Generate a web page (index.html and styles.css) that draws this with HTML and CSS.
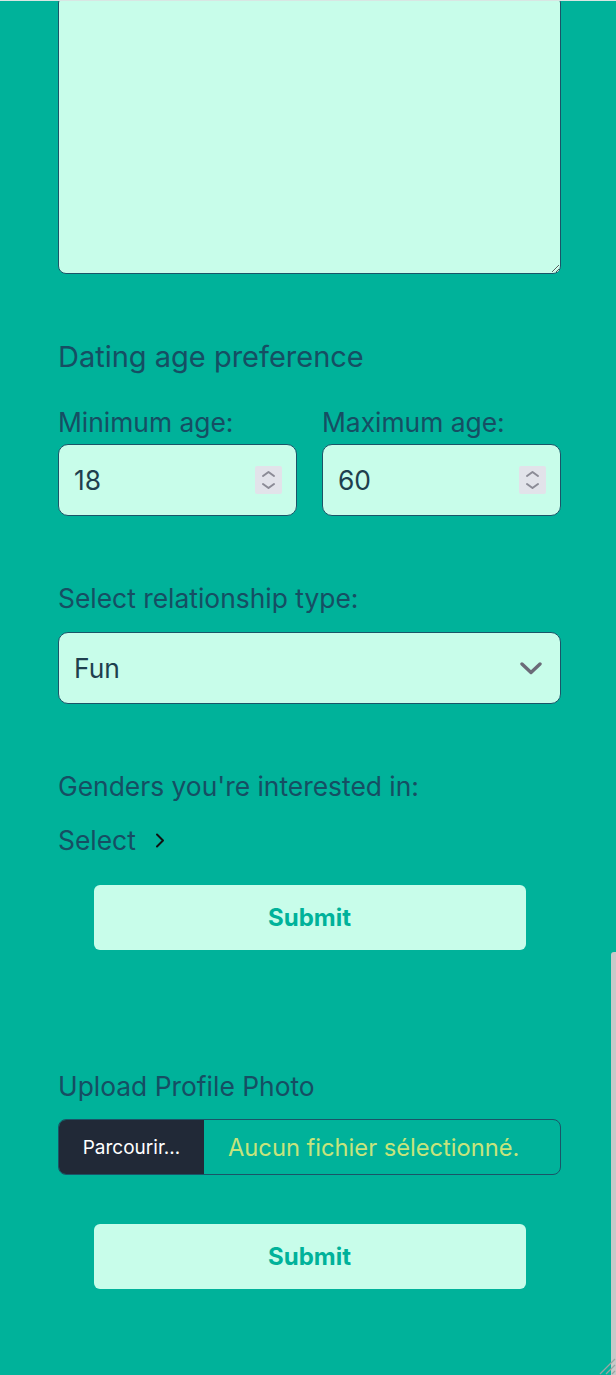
FILE: index.html
```html
<!DOCTYPE html>
<html lang="en">
<head>
<meta charset="utf-8">
<title>Profile</title>
<link rel="stylesheet" href="styles.css">
</head>
<body>
<div class="page">
  <form class="wrap">
    <textarea class="bio"></textarea>

    <h2 class="heading">Dating age preference</h2>
    <div class="age-row">
      <div class="field">
        <label class="label">Minimum age:</label>
        <div class="num-input">
          <span class="val">18</span>
          <span class="spin">
            <svg width="27" height="28" viewBox="0 0 27 28"><path d="M8 10 L13.5 6 L19 10 M8 18 L13.5 22 L19 18" fill="none" stroke="#8b8b96" stroke-width="2" stroke-linecap="round" stroke-linejoin="round"/></svg>
          </span>
        </div>
      </div>
      <div class="field">
        <label class="label">Maximum age:</label>
        <div class="num-input">
          <span class="val">60</span>
          <span class="spin">
            <svg width="27" height="28" viewBox="0 0 27 28"><path d="M8 10 L13.5 6 L19 10 M8 18 L13.5 22 L19 18" fill="none" stroke="#8b8b96" stroke-width="2" stroke-linecap="round" stroke-linejoin="round"/></svg>
          </span>
        </div>
      </div>
    </div>

    <label class="label rel-label">Select relationship type:</label>
    <div class="select">
      <span class="val">Fun</span>
      <svg width="22" height="13" viewBox="0 0 22 13"><path d="M2 2 L11 10.5 L20 2" fill="none" stroke="#6b6b78" stroke-width="3.4" stroke-linecap="round" stroke-linejoin="round"/></svg>
    </div>

    <label class="label gen-label">Genders you're interested in:</label>
    <div class="picker">
      <span>Select</span>
      <svg width="10" height="15" viewBox="0 0 10 15"><path d="M2 1.5 L8 7.5 L2 13.5" fill="none" stroke="#111" stroke-width="2" stroke-linecap="round" stroke-linejoin="round"/></svg>
    </div>

    <button type="button" class="submit first">Submit</button>

    <label class="label up-label">Upload Profile Photo</label>
    <div class="file">
      <span class="browse">Parcourir…</span>
      <span class="none">Aucun fichier sélectionné.</span>
    </div>

    <button type="button" class="submit second">Submit</button>
  </form>
  <div class="scroll-thumb"></div>
  <svg class="grip" width="18" height="20" viewBox="0 0 18 20"><path d="M2 19 L17 4 M8 19 L17 10 M14 19 L17 16" stroke="#9aa6a3" stroke-width="1.3"/></svg>
</div>
</body>
</html>
```
FILE: styles.css
```css
* { box-sizing: border-box; }
html, body { margin: 0; padding: 0; }
body {
  background: #00b29a;
  font-family: Inter, "Noto Sans", sans-serif;
  color: #164e63;
  height: 1375px;
  overflow: hidden;
  border-top: 1px solid #d9e6e3;
}
.page { position: relative; height: 1374px; }
.wrap {
  width: 503px;
  margin-left: 58px;
  display: flex;
  flex-direction: column;
}
.bio {
  display: block;
  width: 100%;
  height: 279px;
  margin: -6px 0 0 0;
  background: #c8fdea;
  border: 1px solid #1b5468;
  border-radius: 8px;
  outline: none;
}
.heading {
  margin: 67px 0 0 0;
  font-size: 29px;
  line-height: 32px;
  font-weight: 400;
  color: #164e63;
}
.label {
  display: block;
  font-size: 26.4px;
  line-height: 30px;
  color: #164e63;
}
.age-row {
  margin-top: 34px;
  display: grid;
  grid-template-columns: 1fr 1fr;
  column-gap: 25px;
}
.field { display: flex; flex-direction: column; }
.num-input, .select {
  margin-top: 7px;
  height: 72px;
  background: #c8fdea;
  border: 1px solid #1b5468;
  border-radius: 10px;
  display: flex;
  align-items: center;
  justify-content: space-between;
  padding: 0 14px 0 15px;
  font-size: 26.4px;
  color: #1e3f4e;
}
.spin {
  display: flex;
  width: 27px;
  height: 28px;
  background: #e2e3ea;
  border-radius: 2px;
}
.rel-label { margin-top: 67px; }
.select { margin-top: 19px; padding: 0 18px 0 15px; }
.gen-label { margin-top: 67px; }
.picker {
  margin-top: 24px;
  display: flex;
  align-items: center;
  gap: 19px;
  font-size: 26.4px;
  line-height: 30px;
  color: #164e63;
}
.submit {
  align-self: center;
  width: 432px;
  height: 65px;
  border: none;
  border-radius: 6px;
  background: #c8fdea;
  color: #00b29a;
  font-family: Inter, "Noto Sans", sans-serif;
  font-weight: 700;
  font-size: 24px;
  padding: 0;
}
.submit.first { margin-top: 30px; }
.up-label { margin-top: 121px; }
.file {
  margin-top: 18px;
  height: 56px;
  border: 1px solid #1b5468;
  border-radius: 8px;
  overflow: hidden;
  display: flex;
  align-items: stretch;
}
.browse {
  width: 145px;
  background: #212937;
  color: #ffffff;
  font-size: 19px;
  display: flex;
  align-items: center;
  justify-content: center;
}
.none {
  display: flex;
  align-items: center;
  padding-left: 24px;
  font-size: 23.7px;
  color: #c6e47c;
}
.submit.second { margin-top: 49px; }
.scroll-thumb {
  position: absolute;
  right: 0;
  top: 951px;
  width: 5px;
  bottom: 0;
  background: #c9c9c9;
  border-radius: 3px 0 0 0;
}
.grip { position: absolute; right: 0; bottom: 0; }
```
